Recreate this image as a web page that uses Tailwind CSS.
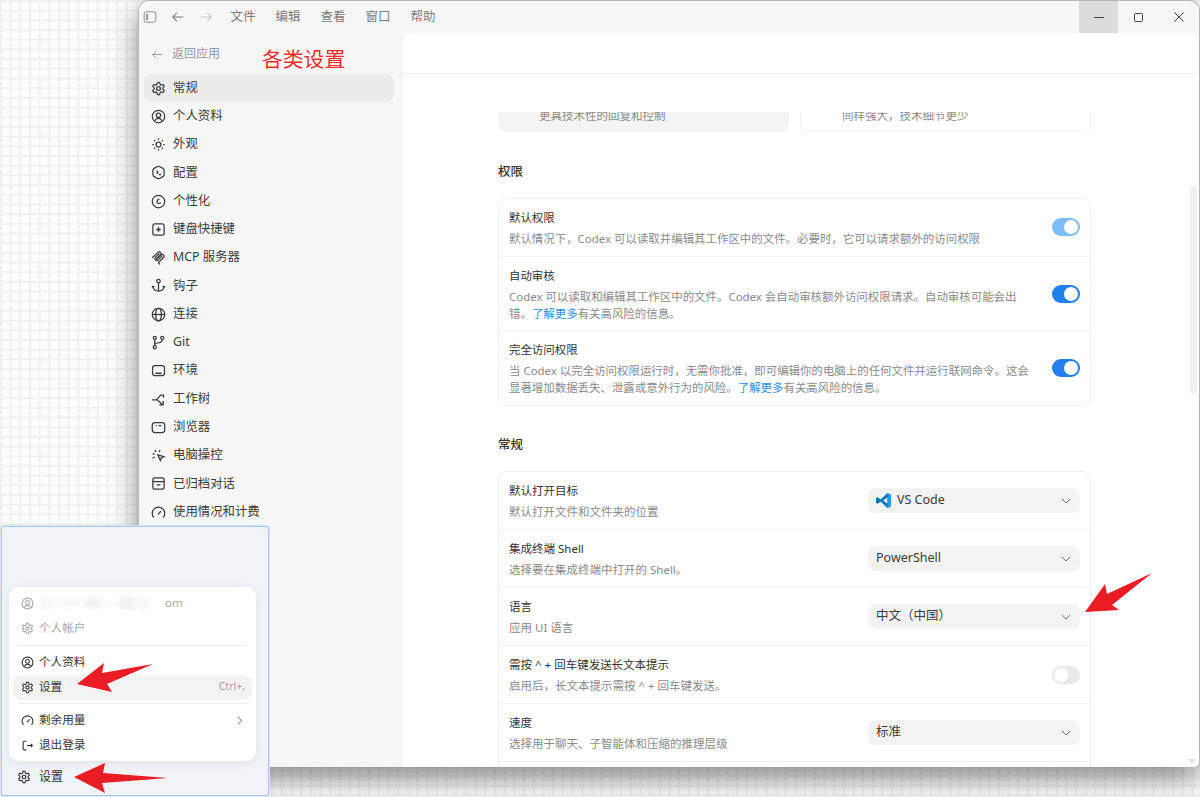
<!DOCTYPE html>
<html lang="zh-CN">
<head>
    <meta charset="UTF-8">
    <title>设置</title>
    <script src="https://cdn.jsdelivr.net/npm/@tailwindcss/browser@4"></script>
</head>
<body class="font-['Noto_Sans','Noto_Sans_CJK_SC',sans-serif]">
    <!-- Shared icons -->
    <svg class="hidden">
        <symbol id="i-gear" viewBox="0 0 24 24"><path d="M12.22 2h-.44a2 2 0 0 0-2 2v.18a2 2 0 0 1-1 1.73l-.43.25a2 2 0 0 1-2 0l-.15-.08a2 2 0 0 0-2.73.73l-.22.38a2 2 0 0 0 .73 2.73l.15.1a2 2 0 0 1 1 1.72v.51a2 2 0 0 1-1 1.74l-.15.09a2 2 0 0 0-.73 2.73l.22.38a2 2 0 0 0 2.73.73l.15-.08a2 2 0 0 1 2 0l.43.25a2 2 0 0 1 1 1.73V20a2 2 0 0 0 2 2h.44a2 2 0 0 0 2-2v-.18a2 2 0 0 1 1-1.73l.43-.25a2 2 0 0 1 2 0l.15.08a2 2 0 0 0 2.73-.73l.22-.39a2 2 0 0 0-.73-2.73l-.15-.08a2 2 0 0 1-1-1.74v-.5a2 2 0 0 1 1-1.74l.15-.09a2 2 0 0 0 .73-2.73l-.22-.38a2 2 0 0 0-2.73-.73l-.15.08a2 2 0 0 1-2 0l-.43-.25a2 2 0 0 1-1-1.73V4a2 2 0 0 0-2-2z"/><circle cx="12" cy="12" r="3"/></symbol>
        <symbol id="i-user" viewBox="0 0 24 24"><circle cx="12" cy="12" r="10"/><circle cx="12" cy="10" r="3.5"/><path d="M6.5 19c1-3 3-4 5.5-4s4.500 1 5.500 4"/></symbol>
        <symbol id="i-gauge" viewBox="0 0 24 24"><path d="M4.500 20a10 10 0 1 1 15 0"/><path d="M11 15l5-5"/></symbol>
        <symbol id="i-chev" viewBox="0 0 24 24"><path d="M6 9l6 6 6-6"/></symbol>
    </svg>

    <!-- Desktop -->
    <div class="relative w-[1200px] h-[797px] overflow-hidden bg-[#fdfdfd] bg-[linear-gradient(#f0f0f0_2px,transparent_2px),linear-gradient(90deg,#f0f0f0_2px,transparent_2px)] bg-[size:9.7px_9.7px]">

        <!-- App window -->
        <div class="absolute left-[138px] top-0 w-[1062px] h-[767px] flex flex-col bg-[#f7f7f7] rounded-t-[10px] rounded-b-[6px] overflow-hidden border-l border-r border-t border-[#b5b5b5] shadow-[0_12px_28px_rgba(0,0,0,0.45)]">

            <!-- Title bar -->
            <div class="h-8 shrink-0 flex items-center text-[#7c7c7c]">
                <svg class="w-3.5 h-3.5 ml-[3.500px] text-[#888]" viewBox="0 0 24 24" fill="none" stroke="currentColor" stroke-width="1.600"><rect x="2" y="3" width="20" height="18" rx="4"/><path d="M8 7H6v10h2z" fill="currentColor" stroke-width="1"/></svg>
                <svg class="w-3.5 h-3.5 ml-[14px] text-[#777]" viewBox="0 0 24 24" fill="none" stroke="currentColor" stroke-width="1.800"><path d="M21 12H3M10 5l-7 7 7 7"/></svg>
                <svg class="w-3.5 h-3.5 ml-[14px] text-[#c4c4c4]" viewBox="0 0 24 24" fill="none" stroke="currentColor" stroke-width="1.800"><path d="M3 12h18M14 5l7 7-7 7"/></svg>
                <div class="ml-[18px] flex gap-5 text-[12.500px]">
                    <span>文件</span>
                    <span>编辑</span>
                    <span>查看</span>
                    <span>窗口</span>
                    <span>帮助</span>
                </div>
                <div class="ml-auto flex h-full text-[#444]">
                    <div class="w-[39px] bg-[#dcdcdc] flex items-center justify-center"><div class="w-2.5 h-px bg-[#444]"></div></div>
                    <div class="w-[41px] flex items-center justify-center"><div class="w-[9px] h-[9px] border border-[#444] rounded-[1.500px]"></div></div>
                    <div class="w-[40px] flex items-center justify-center">
                        <svg class="w-2.5 h-2.5" viewBox="0 0 10 10" fill="none" stroke="currentColor" stroke-width="1"><path d="M.5.5l9 9M9.500.5l-9 9"/></svg>
                    </div>
                </div>
            </div>

            <div class="flex-1 min-h-0 flex">
                <!-- Sidebar -->
                <aside class="w-[262px] shrink-0 pl-[5px] pr-[7px] pt-[9px]">
                    <div class="h-6 flex items-center pl-[7px] gap-[8px] text-[12px] text-[#999]">
                        <svg class="w-[13px] h-[13px]" viewBox="0 0 24 24" fill="none" stroke="currentColor" stroke-width="1.800"><path d="M21 12H3M10 5l-7 7 7 7"/></svg>
                        <span>返回应用</span>
                    </div>
                    <nav class="mt-2 text-[12.400px] text-[#3c3c3c] [&>div]:h-[28.270px] [&>div]:flex [&>div]:items-center [&>div]:gap-[7px] [&>div]:pl-[7px] [&>div]:rounded-lg [&_svg]:w-[15px] [&_svg]:h-[15px] [&_svg]:shrink-0 [&_svg]:fill-none [&_svg]:stroke-[#3a3a3a] [&_svg]:stroke-[2]">
                        <div class="bg-[#ececec]"><svg viewBox="0 0 24 24"><use href="#i-gear"/></svg><span>常规</span></div>
                        <div><svg viewBox="0 0 24 24"><use href="#i-user"/></svg><span>个人资料</span></div>
                        <div><svg viewBox="0 0 24 24"><circle cx="12" cy="12" r="4"/><path d="M12 2v2.500M12 19.500V22M2 12h2.500M19.500 12H22M5 5l1.700 1.700M17.300 17.300 19 19M5 19l1.700-1.700M17.300 6.700 19 5"/></svg><span>外观</span></div>
                        <div><svg viewBox="0 0 24 24" stroke-linejoin="round"><path d="M9.500 2.800a5 5 0 0 1 5 0l4.500 2.600a4 4 0 0 1 2 3.500v6.200a4 4 0 0 1-2 3.500l-4.500 2.600a5 5 0 0 1-5 0L5 18.600a4 4 0 0 1-2-3.500V8.900a4 4 0 0 1 2-3.500z"/><path d="M9 9l2 2.500L9 14M12.500 15.500H16"/></svg><span>配置</span></div>
                        <div><svg viewBox="0 0 24 24"><circle cx="12" cy="12" r="10"/><path d="M13.500 7.500c-3 1.500-4.500 3.500-3.500 6 1 2 4 2 6 .5"/></svg><span>个性化</span></div>
                        <div><svg viewBox="0 0 24 24"><rect x="3" y="3" width="18" height="18" rx="3"/><path d="M12 8.500v7M8.500 12h7" stroke-width="2.400"/></svg><span>键盘快捷键</span></div>
                        <div><svg viewBox="0 0 24 24" stroke-linecap="round"><path d="M2.500 12 11 3.800a3 3 0 0 1 4.300 4.200L9 14.500"/><path d="M9.500 14l6-6a3 3 0 0 1 4.200 4.300l-7.300 7.200a1 1 0 0 0 0 1.500l1.400 1.400"/><path d="M13 6 7 12a3 3 0 0 0 4.200 4.200l6-6"/></svg><span>MCP 服务器</span></div>
                        <div><svg viewBox="0 0 24 24" stroke-width="2.400"><circle cx="12" cy="5" r="2.800"/><path d="M12 8v13M3 13c-.5 5 4 8 9 8s9.500-3 9-8M3 13l-1.500 2M3 13l2.500 1.500M21 13l1.500 2M21 13l-2.500 1.500"/></svg><span>钩子</span></div>
                        <div><svg viewBox="0 0 24 24"><circle cx="12" cy="12" r="10"/><ellipse cx="12" cy="12" rx="4.500" ry="10"/><path d="M2 12h20"/></svg><span>连接</span></div>
                        <div><svg viewBox="0 0 24 24"><circle cx="6" cy="4.500" r="2.500"/><circle cx="18" cy="4.500" r="2.500"/><circle cx="6" cy="19.500" r="2.500"/><path d="M6 7v10M18 7c0 4-4 5.500-8 5.800-2 .2-4 1-4 2.700"/></svg><span>Git</span></div>
                        <div><svg viewBox="0 0 24 24"><rect x="2.500" y="4" width="19" height="16" rx="3.500"/><path d="M7 16.500h10" stroke-width="2.500"/></svg><span>环境</span></div>
                        <div><svg viewBox="0 0 24 24"><path d="M1.500 12.500h7L15.500 5H20v4M10 12.500l8 7.500M19.500 14.500v6h-6"/></svg><span>工作树</span></div>
                        <div><svg viewBox="0 0 24 24"><rect x="2" y="4" width="20" height="16" rx="4.500"/><path d="M7.500 9h1.500M12 9h4.500"/></svg><span>浏览器</span></div>
                        <div><svg viewBox="0 0 24 24"><path d="M11 11l10 3-4.500 1.500L15 20z"/><path d="M6.500 3 8 6.500M2.500 9l3.500 1M2.500 16.500 6 14.500M14.500 3l-1.500 3.500"/></svg><span>电脑操控</span></div>
                        <div><svg viewBox="0 0 24 24"><rect x="3" y="3" width="18" height="18" rx="3"/><path d="M3 9h18M9 14h6"/></svg><span>已归档对话</span></div>
                        <div><svg viewBox="0 0 24 24"><use href="#i-gauge"/></svg><span>使用情况和计费</span></div>
                    </nav>
                </aside>

                <!-- Main panel -->
                <main class="relative flex-1 min-w-0 flex flex-col bg-white rounded-tl-[10px] border-l border-[#ececec]">
                    <div class="h-[41px] shrink-0 border-b border-[#eeeeee]"></div>
                    <div class="flex-1 min-h-0 mt-[38px] overflow-hidden pl-[96px] pr-[108px]">
                        <!-- Scrolled-away mode cards -->
                        <div class="flex gap-[11px] text-[11.500px] text-[#8c8c8c]">
                            <div class="w-[291px] h-5 overflow-hidden bg-[#f4f4f4] rounded-b-lg pl-[41px]"><div class="-mt-[4px] leading-4">更具技术性的回复和控制</div></div>
                            <div class="w-[291px] h-5 overflow-hidden border-x border-b border-[#efefef] rounded-b-lg pl-[41px]"><div class="-mt-[4px] leading-4">同样强大，技术细节更少</div></div>
                        </div>

                        <h2 class="mt-[30px] h-5 leading-5 text-[12.500px] font-medium text-[#333]">权限</h2>
                        <div class="mt-[16px] border border-[#efefef] rounded-lg divide-y divide-[#f1f1f1] text-[#8a8a8a] text-[11.450px]">
                            <div class="h-[57.500px] px-[10px] flex items-center justify-between">
                                <div>
                                    <div class="text-[#333] leading-[19px]">默认权限</div>
                                    <div class="mt-[3px] leading-[17px] whitespace-nowrap">默认情况下，Codex 可以读取并编辑其工作区中的文件。必要时，它可以请求额外的访问权限</div>
                                </div>
                                <div class="w-[28px] h-[18px] rounded-full bg-[#7fbcfa] flex items-center justify-end pr-[2px]"><div class="w-[14px] h-[14px] rounded-full bg-white"></div></div>
                            </div>
                            <div class="h-[75px] px-[10px] flex items-center justify-between">
                                <div>
                                    <div class="text-[#333] leading-[19px]">自动审核</div>
                                    <div class="mt-[3px] leading-[17px] whitespace-nowrap">Codex 可以读取和编辑其工作区中的文件。Codex 会自动审核额外访问权限请求。自动审核可能会出<br>错。<span class="text-[#2f8fec]">了解更多</span>有关高风险的信息。</div>
                                </div>
                                <div class="w-[28px] h-[18px] rounded-full bg-[#1f7fee] flex items-center justify-end pr-[2px]"><div class="w-[14px] h-[14px] rounded-full bg-white"></div></div>
                            </div>
                            <div class="h-[73px] px-[10px] flex items-center justify-between">
                                <div>
                                    <div class="text-[#333] leading-[19px]">完全访问权限</div>
                                    <div class="mt-[3px] leading-[17px] whitespace-nowrap">当 Codex 以完全访问权限运行时，无需你批准，即可编辑你的电脑上的任何文件并运行联网命令。这会<br>显著增加数据丢失、泄露或意外行为的风险。<span class="text-[#2f8fec]">了解更多</span>有关高风险的信息。</div>
                                </div>
                                <div class="w-[28px] h-[18px] rounded-full bg-[#1f7fee] flex items-center justify-end pr-[2px]"><div class="w-[14px] h-[14px] rounded-full bg-white"></div></div>
                            </div>
                        </div>

                        <h2 class="mt-[29.500px] h-5 leading-5 text-[12.500px] font-medium text-[#333]">常规</h2>
                        <div class="mt-[16px] border border-[#efefef] rounded-lg divide-y divide-[#f1f1f1] text-[#8a8a8a] text-[11.500px]">
                            <div class="h-[58px] px-[10px] flex items-center justify-between">
                                <div>
                                    <div class="text-[#333] leading-[19px]">默认打开目标</div>
                                    <div class="mt-[3px] leading-[17px]">默认打开文件和文件夹的位置</div>
                                </div>
                                <div class="w-[212px] h-[25px] rounded-lg bg-[#f3f3f3] flex items-center pl-[7px] pr-[6px] gap-[5px] text-[12.500px] text-[#3c3c3c]">
                                    <svg class="w-[17px] h-[17px]" viewBox="0 0 24 24"><path fill="#0a6fc0" d="M17.500 1.500 8 10.500 3.800 7.300 1.500 8.300v7.400l2.300 1L8 13.500l9.500 9L22.500 20V4zM17.500 7.500v9L11.500 12z"/><path fill="#1f9cf0" d="M17.500 1.500 22.500 4v16l-5 2.500z"/></svg>
                                    <span>VS Code</span>
                                    <svg class="ml-auto w-4 h-4 fill-none stroke-[#777] stroke-[1.500]" viewBox="0 0 24 24"><use href="#i-chev"/></svg>
                                </div>
                            </div>
                            <div class="h-[58px] px-[10px] flex items-center justify-between">
                                <div>
                                    <div class="text-[#333] leading-[19px]">集成终端 Shell</div>
                                    <div class="mt-[3px] leading-[17px]">选择要在集成终端中打开的 Shell。</div>
                                </div>
                                <div class="w-[212px] h-[25px] rounded-lg bg-[#f3f3f3] flex items-center pl-2 pr-[6px] text-[12.500px] text-[#3c3c3c]">
                                    <span>PowerShell</span>
                                    <svg class="ml-auto w-4 h-4 fill-none stroke-[#777] stroke-[1.500]" viewBox="0 0 24 24"><use href="#i-chev"/></svg>
                                </div>
                            </div>
                            <div class="h-[58px] px-[10px] flex items-center justify-between">
                                <div>
                                    <div class="text-[#333] leading-[19px]">语言</div>
                                    <div class="mt-[3px] leading-[17px]">应用 UI 语言</div>
                                </div>
                                <div class="w-[212px] h-[25px] rounded-lg bg-[#f3f3f3] flex items-center pl-2 pr-[6px] text-[12.500px] text-[#3c3c3c]">
                                    <span>中文（中国）</span>
                                    <svg class="ml-auto w-4 h-4 fill-none stroke-[#777] stroke-[1.500]" viewBox="0 0 24 24"><use href="#i-chev"/></svg>
                                </div>
                            </div>
                            <div class="h-[58px] px-[10px] flex items-center justify-between">
                                <div>
                                    <div class="text-[#333] leading-[19px]">需按 ^ + 回车键发送长文本提示</div>
                                    <div class="mt-[3px] leading-[17px]">启用后，长文本提示需按 ^ + 回车键发送。</div>
                                </div>
                                <div class="w-[28px] h-[18px] rounded-full bg-[#e9e9e9] flex items-center pl-[2px]"><div class="w-[14px] h-[14px] rounded-full bg-white"></div></div>
                            </div>
                            <div class="h-[58px] px-[10px] flex items-center justify-between">
                                <div>
                                    <div class="text-[#333] leading-[19px]">速度</div>
                                    <div class="mt-[3px] leading-[17px]">选择用于聊天、子智能体和压缩的推理层级</div>
                                </div>
                                <div class="w-[212px] h-[25px] rounded-lg bg-[#f3f3f3] flex items-center pl-2 pr-[6px] text-[12.500px] text-[#3c3c3c]">
                                    <span>标准</span>
                                    <svg class="ml-auto w-4 h-4 fill-none stroke-[#777] stroke-[1.500]" viewBox="0 0 24 24"><use href="#i-chev"/></svg>
                                </div>
                            </div>
                            <div class="h-[58px]"></div>
                        </div>
                    </div>

                    <!-- Scrollbar -->
                    <div class="absolute left-[788px] top-[153px] w-[7px] h-[208px] rounded-full bg-[#f0f0f0]"></div>
                    <div class="absolute right-[3px] bottom-[3px] w-0 h-0 border-x-[4px] border-x-transparent border-t-[5px] border-t-[#e2e2e2]"></div>
                </main>
            </div>
        </div>

        <!-- Annotation label -->
        <div class="absolute left-[262px] top-[44px] text-[20.800px] leading-[30px] text-[#ee2b2e] [text-shadow:0_0_3px_#ffffff]">各类设置</div>

        <!-- Sidebar footer popup -->
        <div class="absolute left-[1px] top-[526px] w-[268px] h-[270px] flex flex-col justify-end bg-[#f1f3f9] border border-[#a8c8ee] shadow-[0_0_0_1px_#d6e4f5] rounded-[3px] text-[#333] text-[11.600px]">
            <div class="ml-[7px] mr-[12px] py-[3.500px] bg-white rounded-[10px] shadow-[0_2px_10px_rgba(0,0,0,0.07)] [&_svg]:w-[13px] [&_svg]:h-[13px] [&_svg]:shrink-0 [&_svg]:fill-none [&_svg]:stroke-current [&_svg]:stroke-[2]">
                <div class="h-[25px] flex items-center gap-[5px] px-3 text-[#a6a6a6]">
                    <svg viewBox="0 0 24 24"><use href="#i-user"/></svg>
                    <div class="w-[124px] h-[15px] flex items-center gap-[3px] blur-[2px]">
                        <div class="w-[14px] h-[13px] bg-[#f7f7f7]"></div>
                        <div class="w-[26px] h-[8px] bg-[#fafafa]"></div>
                        <div class="w-[16px] h-[10px] bg-[#f1f1f1]"></div>
                        <div class="w-[12px] h-[7px] bg-[#fafafa]"></div>
                        <div class="w-[16px] h-[12px] bg-[#f0f0f0]"></div>
                        <div class="w-[10px] h-[14px] bg-[#f7f7f7]"></div>
                    </div>
                    <span class="-ml-[3px] text-[11.500px]">om</span>
                </div>
                <div class="h-[25px] flex items-center gap-[5px] px-3 text-[#a6a6a6]">
                    <svg viewBox="0 0 24 24"><use href="#i-gear"/></svg>
                    <span>个人帐户</span>
                </div>
                <div class="mx-[9px] my-1 h-px bg-[#ececec]"></div>
                <div class="h-[25px] flex items-center gap-[5px] px-3">
                    <svg viewBox="0 0 24 24"><use href="#i-user"/></svg>
                    <span>个人资料</span>
                </div>
                <div class="mx-1 h-[25px] flex items-center gap-[5px] pl-2 pr-[7px] bg-[#f3f3f3] rounded-lg">
                    <svg viewBox="0 0 24 24"><use href="#i-gear"/></svg>
                    <span>设置</span>
                    <span class="ml-auto text-[10.500px] text-[#a0a0a0]">Ctrl+,</span>
                </div>
                <div class="mx-[9px] mt-[3px] mb-1 h-px bg-[#ececec]"></div>
                <div class="h-[25px] flex items-center gap-[5px] pl-3 pr-[10px]">
                    <svg viewBox="0 0 24 24"><use href="#i-gauge"/></svg>
                    <span>剩余用量</span>
                    <svg class="ml-auto text-[#9a9a9a]" viewBox="0 0 24 24"><path d="M9 5l7 7-7 7"/></svg>
                </div>
                <div class="h-[25px] flex items-center gap-[5px] px-3">
                    <svg viewBox="0 0 24 24"><path d="M10 4H6a2 2 0 0 0-2 2v12a2 2 0 0 0 2 2h4M11 12h10M18 9l3 3-3 3"/></svg>
                    <span>退出登录</span>
                </div>
            </div>
            <div class="h-[34px] shrink-0 flex items-center gap-[8px] pl-[15px] pb-[3px] text-[12px]">
                <svg class="w-[14px] h-[14px] fill-none stroke-current stroke-[2]" viewBox="0 0 24 24"><use href="#i-gear"/></svg>
                <span>设置</span>
            </div>
        </div>

        <!-- Red arrows drawn over the screenshot -->
        <svg class="absolute left-0 top-0 pointer-events-none" width="1200" height="797" viewBox="0 0 1200 797" fill="#ec1c24">
            <polygon points="77,684 104,663 102,673 153,664 107,684 112,692"/>
            <polygon points="74,777 105,763 103,773 168,778 102,783 105,793"/>
            <polygon points="1085,612 1105,584 1107,594 1152,573 1112,605 1119,610"/>
        </svg>
    </div>
</body>
</html>
